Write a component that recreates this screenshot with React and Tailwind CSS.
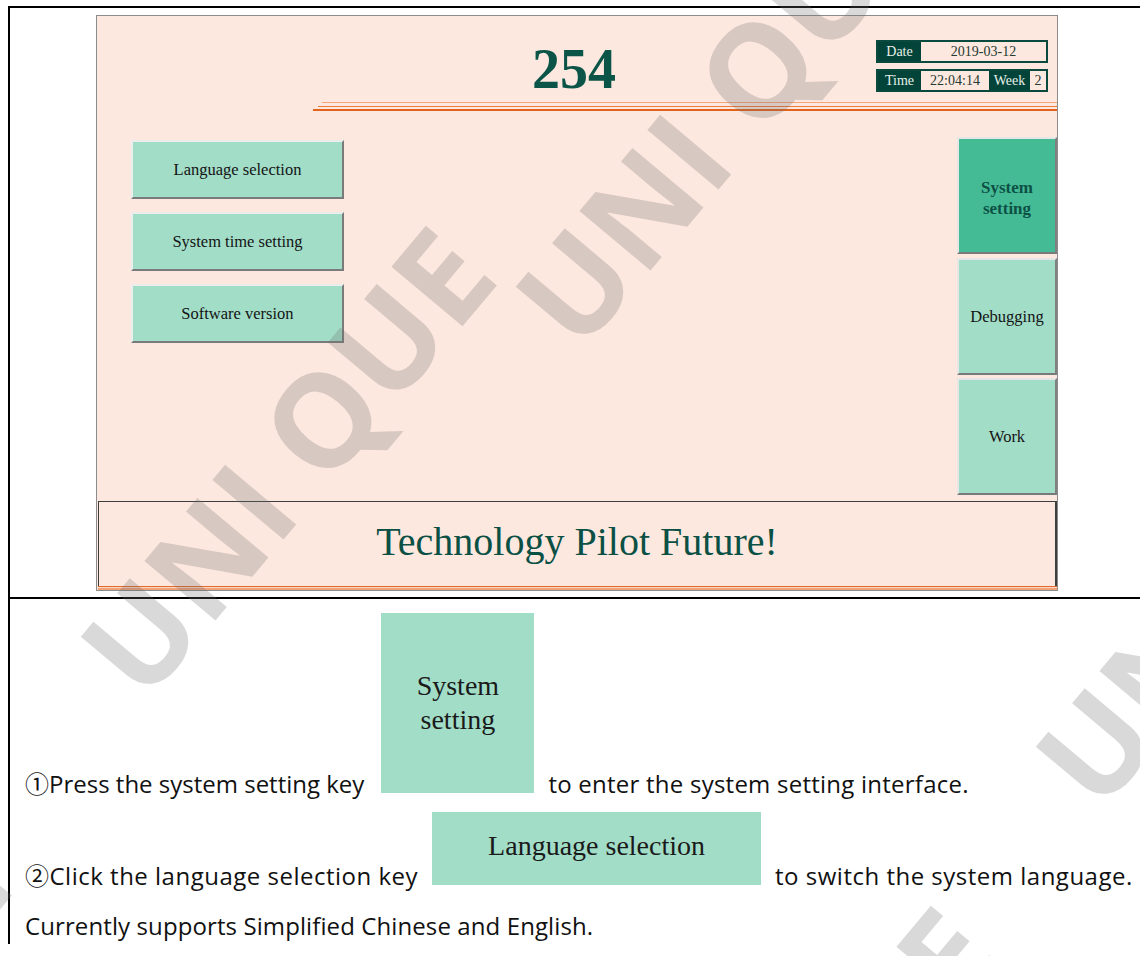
import React from "react";

const serif = "font-['Liberation_Serif',serif]";

const SideKey = ({ label, className = "" }) => (
  <div
    className={`w-[213px] h-[59px] flex items-center justify-center bg-[#a2ddc8] border-2 border-t-[#ededed] border-l-[#ededed] border-r-[#7b7b7b] border-b-[#7b7b7b] text-[16.5px] text-[#141414] pt-[2px] ${className}`}
  >
    {label}
  </div>
);

const NavKey = ({ children, active, className = "" }) => (
  <div
    className={`w-[100px] h-[117px] flex items-center justify-center text-center border-2 border-t-[#e6e6e6] border-l-[#e6e6e6] border-r-[#808080] border-b-[#7a7a7a] leading-[21px] ${
      active ? "bg-[#45bb95] text-[#0d5045] font-bold text-[17px] pt-[4px]" : "bg-[#a2ddc8] text-[#141414] text-[16.5px]"
    } ${className}`}
  >
    {children}
  </div>
);

const Screen = () => (
  <div className={`w-[962px] h-[576px] border border-[#8c8c8c] bg-[#fde8df] flex flex-col ${serif}`}>
    {/* header */}
    <div className="h-[86px] grid grid-cols-[1fr_auto_1fr] items-start pt-[24px]">
      <div />
      <div className="text-[56px] font-bold leading-none text-[#0a5548] mt-[1px] -ml-[6px]">254</div>
      <div className="justify-self-end mr-[9px] flex flex-col gap-[6px] text-[14px] leading-none">
        <div className="w-[172px] h-[23px] flex border-2 border-[#0a4a3e]">
          <div className="w-[43px] bg-[#02443a] text-[#e8f0e8] flex items-center justify-center">Date</div>
          <div className="flex-1 flex items-center justify-center text-[#263a32]">2019-03-12</div>
        </div>
        <div className="w-[172px] h-[23px] flex border-2 border-[#0a4a3e]">
          <div className="w-[43px] bg-[#02443a] text-[#e8f0e8] flex items-center justify-center">Time</div>
          <div className="w-[68px] flex items-center justify-center text-[#263a32]">22:04:14</div>
          <div className="w-[41px] bg-[#02443a] text-[#e8f0e8] flex items-center justify-center">Week</div>
          <div className="flex-1 flex items-center justify-center text-[#263a32]">2</div>
        </div>
      </div>
    </div>

    {/* orange rules */}
    <div className="h-[9px] flex flex-col">
      <div className="h-[1px] ml-[225px] bg-[#f3a67c]" />
      <div className="h-[1px] mt-[3px] ml-[221px] bg-[#ee7a3c]" />
      <div className="h-[2px] mt-[2px] ml-[216px] bg-[#e3621c]" />
    </div>

    {/* body */}
    <div className="h-[390px] flex">
      <div className="ml-[34px] mt-[29px] flex flex-col gap-[13px]">
        <SideKey label="Language selection" />
        <SideKey label="System time setting" />
        <SideKey label="Software version" />
      </div>
      <div className="flex-1" />
      <div className="pt-[26px] flex flex-col">
        <NavKey active>
          System
          <br />
          setting
        </NavKey>
        <NavKey className="mt-[4px]">Debugging</NavKey>
        <NavKey className="mt-[3px]">Work</NavKey>
      </div>
    </div>

    {/* banner */}
    <div className="h-[89px] ml-[1px] flex flex-col">
      <div className="flex-1 border-t border-l border-r-2 border-[#3e3e3e] flex items-center justify-center pb-[4px] text-[40px] text-[#0b5045]">
        Technology Pilot Future!
      </div>
      <div className="h-[1px] bg-[#e4692a]" />
      <div className="h-[1px] bg-[#fbd6c2]" />
      <div className="h-[2px] bg-[#f1a378]" />
    </div>
  </div>
);

const Watermark = ({ className }) => (
  <div
    className={`absolute -translate-x-1/2 -translate-y-1/2 rotate-[-50deg] whitespace-nowrap font-['Open_Sans',sans-serif] font-bold text-[130px] leading-none text-[rgba(110,110,110,0.26)] ${className}`}
  >
    UNI QUE
  </div>
);

export default function App() {
  return (
    <div className="relative w-[1140px] h-[956px] overflow-hidden bg-white">
      <div className="ml-[8px] mt-[6px] w-[1170px] border-l-2 border-t-2 border-black">
        <div className="h-[591px] border-b-2 border-black pl-[86px] pt-[7px]">
          <Screen />
        </div>

        <div className="pl-[15px] font-['Open_Sans','Noto_Sans_CJK_SC',sans-serif] text-[24px] leading-[36px] text-[#111]">
          <p className="mt-[14px]">
            ①Press the system setting key
            <span className="inline-block overflow-hidden align-baseline w-[153px] h-[180px] ml-[17px] mr-[14px] bg-[#a2ddc8]">
              <span className={`h-full flex items-center justify-center text-center text-[28px] leading-[34px] text-[#1a1a1a] ${serif}`}>
                System
                <br />
                setting
              </span>
            </span>
            <span className="tracking-[0.24px]">to enter the system setting interface.</span>
          </p>
          <p className="mt-[10px] tracking-[0.5px]">
            ②Click the language selection key
            <span className="inline-block overflow-hidden align-baseline w-[329px] h-[73px] mx-[14px] bg-[#a2ddc8] tracking-normal">
              <span className={`block pt-[17px] text-center text-[28px] leading-[34px] text-[#1a1a1a] ${serif}`}>
                Language selection
              </span>
            </span>
            to switch the system language.
          </p>
          <p className="mt-[14px] tracking-[0.1px]">Currently supports Simplified Chinese and English.</p>
        </div>
      </div>

      <div className="absolute inset-0 pointer-events-none">
        <Watermark className="left-[285px] top-[460px]" />
        <Watermark className="left-[720px] top-[110px]" />
        <Watermark className="left-[1240px] top-[570px]" />
        <Watermark className="left-[790px] top-[1140px]" />
        <Watermark className="left-[-200px] top-[1070px]" />
      </div>
    </div>
  );
}
